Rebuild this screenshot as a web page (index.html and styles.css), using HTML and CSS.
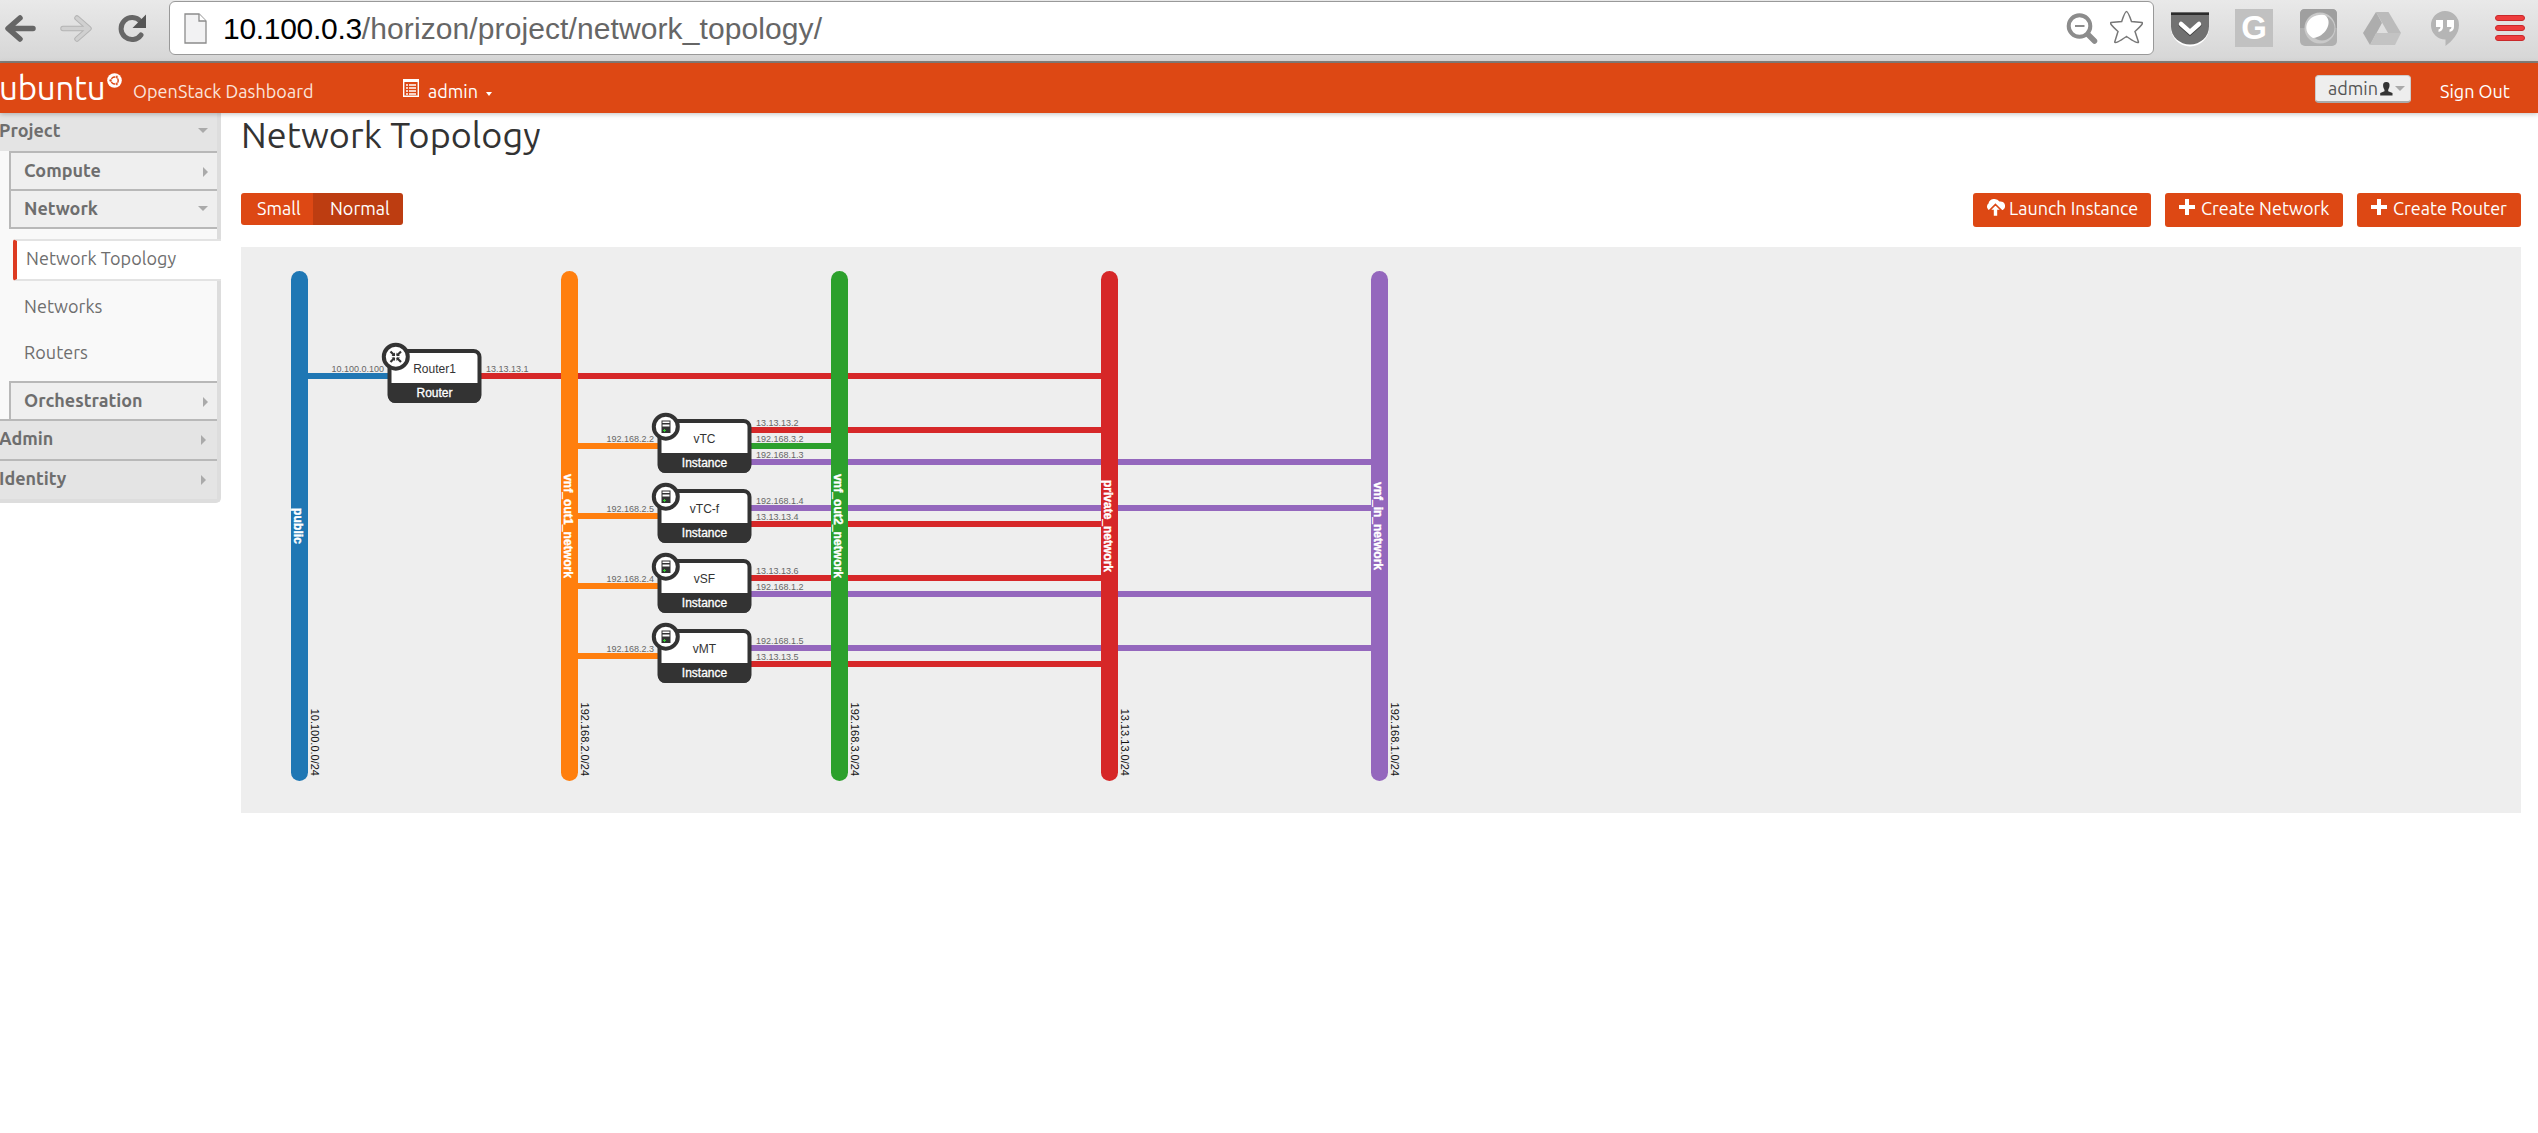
FILE: index.html
```html
<!DOCTYPE html>
<html lang="en">
<head>
<meta charset="utf-8">
<title>Network Topology - OpenStack Dashboard</title>
<link rel="stylesheet" href="styles.css">
</head>
<body>
<div class="browser">
  <svg class="nav-icons" width="169" height="62" viewBox="0 0 169 62">
    <path d="M20 18 8 28.500 20 39M9 28.500H33" fill="none" stroke="#666" stroke-width="5.500" stroke-linecap="round" stroke-linejoin="round"/>
    <path d="M77 18 89 28.500 77 39M88 28.500H63" fill="none" stroke="#b5b5b5" stroke-width="5.500" stroke-linecap="round" stroke-linejoin="round"/>
    <path d="M77 18 89 28.500 77 39M88 28.500H63" fill="none" stroke="#d0d0d0" stroke-width="3.500" stroke-linecap="round" stroke-linejoin="round"/>
    <path d="M140.500 21.500A11 11 0 1 0 141 35" fill="none" stroke="#666" stroke-width="5" stroke-linecap="round"/>
    <path d="M146 14.500V28H132.500Z" fill="#555"/>
  </svg>
  <div class="address">
    <svg class="page-icon" width="24" height="32" viewBox="0 0 24 32"><path d="M1 1H15L22 8V30H1Z" fill="#f2f2f3" stroke="#8c8c8c" stroke-width="1.300"/><path d="M15 1V8H22" fill="#fff" stroke="#8c8c8c" stroke-width="1.300"/></svg>
    <span class="url"><b>10.100.0.3</b>/horizon/project/network_topology/</span>
    <svg class="addr-icons" width="87" height="53" viewBox="2066 2 87 53">
      <circle cx="2079.500" cy="26" r="10.800" fill="none" stroke="#8c8c8c" stroke-width="4"/>
      <path d="M2075 26H2084.500" stroke="#8c8c8c" stroke-width="2"/><path d="M2088 34.500 2094.500 41" stroke="#8c8c8c" stroke-width="5.500" stroke-linecap="round"/>
      <path d="M2126.500 11.500Q2128 11.500 2131.500 21.500L2142 22.500Q2144 23.500 2135 31.500L2138.500 42Q2138 44.500 2126.500 36.500Q2115 44.500 2114.700 42L2118 31.500Q2109 23.500 2111 22.500L2121.700 21.500Q2125 11.500 2126.500 11.500Z" fill="#fff" stroke="#777" stroke-width="1.500"/>
    </svg>
  </div>
  <svg class="extensions" width="384" height="62" viewBox="2154 0 384 62">
    <path d="M2171 14H2209V28A19 18.500 0 0 1 2171 28Z" fill="#fff"/>
    <path d="M2171 12.500H2209V26.500A19 18 0 0 1 2171 26.500Z" fill="#717171"/><path d="M2171 12.500H2209V15H2171Z" fill="#2c2c2c"/>
    <path d="M2181 25 2190 33 2199 25" fill="none" stroke="#444" stroke-width="5" stroke-linecap="round"/><path d="M2181 24 2190 32 2199 24" fill="none" stroke="#fff" stroke-width="4.500" stroke-linecap="round"/>
    <rect x="2235" y="9" width="38" height="38" fill="#c1c1c1"/><text class="ext-g" x="2254" y="39" text-anchor="middle">G</text>
    <rect x="2300" y="9" width="37" height="37" rx="5" fill="#b0b0b0"/><path d="M2300 28V14Q2300 9 2305 9H2332Q2337 9 2337 14V28Z" fill="#9f9f9f"/>
    <circle cx="2320" cy="28" r="15.500" fill="#c9c9c9"/><circle cx="2322" cy="28" r="12.500" fill="#a9a9a9"/><path d="M2326 16C2333 23 2325 37 2313 38C2302 32 2305 17 2319 15Q2324 14 2326 16Z" fill="#fff"/>
    <path d="M2376 12H2388.500L2401 33H2388Z" fill="#bbb"/><path d="M2376 12 2363 33 2370 45 2382 23Z" fill="#adadad"/><path d="M2376 33H2401L2395 45H2370Z" fill="#c3c3c3"/>
    <path d="M2445 11A14 14 0 0 1 2459 25C2459 34 2452 41 2445.500 46V39.500A14 14 0 0 1 2445 11Z" fill="#b5b5b5"/>
    <path d="M2436 20H2443V27Q2443 31 2438.500 32V29.500Q2440.500 29 2440.500 27H2436ZM2447 20H2454V27Q2454 31 2449.500 32V29.500Q2451.500 29 2451.500 27H2447Z" fill="#fff"/>
    <g fill="#ee3c3c" stroke="#c9282b"><rect x="2495.500" y="15.500" width="29" height="5" rx="2.500"/><rect x="2495.500" y="25.500" width="29" height="5" rx="2.500"/><rect x="2495.500" y="35.500" width="29" height="5" rx="2.500"/></g>
  </svg>
</div>
<header class="topbar">
  <div class="brand"><span class="logo">ubuntu</span>
    <svg class="logo-mark" width="15" height="15" viewBox="0 0 15 15"><circle cx="7.500" cy="7.500" r="7.300" fill="#fff"/><circle cx="7.700" cy="7.500" r="3.500" fill="none" stroke="#dd4814" stroke-width="1.500"/><g fill="#dd4814" stroke="#fff" stroke-width=".6"><circle cx="3.500" cy="7.500" r="1.400"/><circle cx="9.800" cy="4" r="1.400"/><circle cx="9.800" cy="11" r="1.400"/></g></svg>
    <span class="product">OpenStack Dashboard</span></div>
  <div class="switcher">
    <svg width="16" height="18" viewBox="0 0 16 18"><path d="M.700 .700H15.300V17.300H.700Z" fill="none" stroke="#fff" stroke-width="1.400"/><path d="M1 2H15" stroke="#fff" stroke-width="2"/><path d="M3 6H5M3 9H5M3 12H5M3 15H5M6 6H13M6 9H13M6 12H13M6 15H13" stroke="#fff" stroke-width="1.500"/></svg>
    <span class="proj">admin</span><i class="caret white"></i>
  </div>
  <div class="account"><span class="account-name">admin</span>
    <svg width="13" height="14" viewBox="0 0 13 14"><path d="M6.300 0C9 0 9.800 1.500 9.500 4C9.300 6 8.500 6.500 8.200 8V9.300L12.500 11V13.500H.200V11L4.500 9.300V8C4 6.500 3.300 6 3.100 4C2.900 1.500 3.800 0 6.300 0Z" fill="#333"/></svg>
    <i class="caret grey"></i></div>
  <a class="signout">Sign Out</a>
</header>
<div class="page">
  <nav class="sidebar">
    <div class="panel first"><span>Project</span><i class="down"></i></div>
    <div class="groups">
      <div class="group"><span>Compute</span><i class="right"></i></div>
      <div class="group open"><span>Network</span><i class="down"></i></div>
      <div class="links">
        <a class="link active">Network Topology</a>
        <a class="link">Networks</a>
        <a class="link">Routers</a>
      </div>
      <div class="group"><span>Orchestration</span><i class="right"></i></div>
    </div>
    <div class="panel"><span>Admin</span><i class="right"></i></div>
    <div class="panel last"><span>Identity</span><i class="right"></i></div>
  </nav>
  <main class="content">
    <h1>Network Topology</h1>
    <div class="toolbar">
      <div class="sizes"><button class="small">Small</button><button class="normal">Normal</button></div>
      <div class="actions">
        <button class="launch"><svg width="19" height="19" viewBox="0 0 19 19"><path d="M4 12.500A4 4 0 0 1 2.500 5.500A6 5.500 0 0 1 13.500 3.500A4.500 4.500 0 0 1 15.500 12.500Z" fill="#fff"/><path d="M9.500 6.500 15.500 12.500H12V18.500H7V12.500H3.500Z" fill="#fff" stroke="#dd4814" stroke-width="1.600"/></svg><span>Launch Instance</span></button>
        <button class="network"><svg width="16" height="16" viewBox="0 0 16 16"><path d="M6 0H10V6H16V10H10V16H6V10H0V6H6Z" fill="#fff"/></svg><span>Create Network</span></button>
        <button class="router"><svg width="16" height="16" viewBox="0 0 16 16"><path d="M6 0H10V6H16V10H10V16H6V10H0V6H6Z" fill="#fff"/></svg><span>Create Router</span></button>
      </div>
    </div>
    <svg class="topology" width="2280" height="566" viewBox="241 247 2280 566">
      <defs>
        <g id="box"><rect x="2" y="2" width="90" height="50" rx="6" fill="#fff" stroke="#333" stroke-width="4"/><path d="M1 34H93V46Q93 54 86 54H8Q1 54 1 46Z" fill="#333"/><circle cx="8.300" cy="7.700" r="12" fill="#fff" stroke="#333" stroke-width="4"/></g>
        <g id="server"><path d="M4 1.500H13V14H4Z" fill="#333"/><path d="M5 2.500H12V4H5ZM5 5.500H12V7.500H5Z" fill="#fff"/><path d="M5.500 11.500H8.500M7 10V13" stroke="#3c3" stroke-width="1.100"/></g>
      </defs>
      <g class="ports">
        <path stroke="#1f77b4" d="M300 376H388"/>
        <path stroke="#ff7f0e" d="M570 446H658M570 516H658M570 586H658M570 656H658"/>
        <path stroke="#2ca02c" d="M751 446H840"/>
        <path stroke="#d62728" d="M481 376H1110M751 430H1110M751 524H1110M751 578H1110M751 664H1110"/>
        <path stroke="#9467bd" d="M751 462H1380M751 508H1380M751 594H1380M751 648H1380"/>
      </g>
      <g>
        <rect x="291" y="271" width="17" height="510" rx="8.500" fill="#1f77b4"/>
        <rect x="561" y="271" width="17" height="510" rx="8.500" fill="#ff7f0e"/>
        <rect x="831" y="271" width="17" height="510" rx="8.500" fill="#2ca02c"/>
        <rect x="1101" y="271" width="17" height="510" rx="8.500" fill="#d62728"/>
        <rect x="1371" y="271" width="17" height="510" rx="8.500" fill="#9467bd"/>
      </g>
      <g class="net-name">
        <text transform="translate(294 508) rotate(90)" textLength="36">public</text>
        <text transform="translate(564 474) rotate(90)" textLength="104">vnf_out1_network</text>
        <text transform="translate(834 474) rotate(90)" textLength="104">vnf_out2_network</text>
        <text transform="translate(1104 480) rotate(90)" textLength="92">private_network</text>
        <text transform="translate(1374 482) rotate(90)" textLength="88">vnf_in_network</text>
      </g>
      <g class="subnet">
        <text transform="translate(311 776) rotate(90)">10.100.0.0/24</text>
        <text transform="translate(581 776) rotate(90)">192.168.2.0/24</text>
        <text transform="translate(851 776) rotate(90)">192.168.3.0/24</text>
        <text transform="translate(1121 776) rotate(90)">13.13.13.0/24</text>
        <text transform="translate(1391 776) rotate(90)">192.168.1.0/24</text>
      </g>
      <g class="ip end">
        <text x="384" y="372">10.100.0.100</text><text x="654" y="442">192.168.2.2</text><text x="654" y="512">192.168.2.5</text><text x="654" y="582">192.168.2.4</text><text x="654" y="652">192.168.2.3</text>
      </g>
      <g class="ip">
        <text x="486" y="372">13.13.13.1</text><text x="756" y="426">13.13.13.2</text><text x="756" y="442">192.168.3.2</text><text x="756" y="458">192.168.1.3</text>
        <text x="756" y="504">192.168.1.4</text><text x="756" y="520">13.13.13.4</text><text x="756" y="574">13.13.13.6</text><text x="756" y="590">192.168.1.2</text>
        <text x="756" y="644">192.168.1.5</text><text x="756" y="660">13.13.13.5</text>
      </g>
      <g class="node" transform="translate(387.500 349)"><use href="#box"/>
        <path d="M3 2.500 7 6.500M13.500 2.500 9.500 6.500M3 13 7 9M13.500 13 9.500 9" stroke="#333" stroke-width="2.200"/><path d="M7.500 3.500V7H4ZM9 3.500V7H12.500ZM7.500 12V8.500H4ZM9 12V8.500H12.500Z" fill="#333"/>
        <text x="47" y="24">Router1</text><text class="kind" x="47" y="48">Router</text></g>
      <g class="node" transform="translate(657.500 419)"><use href="#box"/><use href="#server"/><text x="47" y="24">vTC</text><text class="kind" x="47" y="48">Instance</text></g>
      <g class="node" transform="translate(657.500 489)"><use href="#box"/><use href="#server"/><text x="47" y="24">vTC-f</text><text class="kind" x="47" y="48">Instance</text></g>
      <g class="node" transform="translate(657.500 559)"><use href="#box"/><use href="#server"/><text x="47" y="24">vSF</text><text class="kind" x="47" y="48">Instance</text></g>
      <g class="node" transform="translate(657.500 629)"><use href="#box"/><use href="#server"/><text x="47" y="24">vMT</text><text class="kind" x="47" y="48">Instance</text></g>
    </svg>
  </main>
</div>
</body>
</html>
```
FILE: styles.css
```css
* { box-sizing: border-box; }
body { margin: 0; background: #fff; font: 18px/1.2 Ubuntu, "Noto Sans", sans-serif; color: #333; }
svg { display: block; flex: none; }
.browser { height: 63px; display: flex; background: linear-gradient(#e9e9e9, #d6d6d6); border-bottom: 2px solid #85817c; }
.address { width: 1985px; height: 54px; margin-top: 1px; display: flex; align-items: flex-start; border: 1px solid #999; border-radius: 6px; background: #fff; }
.page-icon { margin: 11px 0 0 14px; }
.url { margin-left: 15px; font: 30px/54px "Liberation Sans", Arial, sans-serif; letter-spacing: .1px; color: #666; white-space: nowrap; }
.url b { font-weight: 400; color: #000; letter-spacing: -.3px; }
.addr-icons { margin-left: auto; }
.ext-g { font: bold 33px "Liberation Sans", Arial, sans-serif; fill: #fff; }
.topbar { position: relative; height: 50px; display: flex; align-items: flex-start; background: #dd4814; color: #fff; box-shadow: 0 1px 5px rgba(0, 0, 0, .25); z-index: 1; }
.brand { width: 403px; display: flex; align-items: flex-start; }
.logo { width: 107px; font-size: 33px; line-height: 49px; letter-spacing: -.2px; text-indent: -1px; }
.logo-mark { margin-top: 10px; }
.product { margin-left: 11px; line-height: 56px; letter-spacing: .05px; color: #fbe4dc; white-space: nowrap; }
.switcher { display: flex; align-items: flex-start; padding-top: 16px; }
.proj { margin-left: 9px; line-height: 24px; width: 58px; }
.caret { border: 3px solid transparent; border-bottom: 0; }
.caret.white { border-top: 4px solid #fff; margin-top: 13px; }
.caret.grey { border-width: 5px 5px 0; border-top-color: #aaa; margin-left: 2px; }
.account { margin: 12px 0 0 auto; width: 96px; height: 28px; padding-left: 12px; display: flex; align-items: center; background: #eee; border: 1px solid #ccc; border-bottom: 2px solid #aaa; border-radius: 4px; color: #555; }
.account-name { width: 52px; }
.signout { width: 98px; margin-left: 29px; line-height: 56px; }
.page { display: flex; align-items: flex-start; }
.sidebar { width: 221px; height: 390px; border-right: 4px solid #ddd; border-bottom: 4px solid #ddd; border-radius: 0 0 5px 0; background: #f9f9f9; color: #6e6e6e; }
.panel, .group { display: flex; align-items: center; justify-content: space-between; font-weight: 700; border-top: 2px solid #b8b8b8; }
.panel { height: 40px; padding: 0 11px 3px 0; background: #e4e4e4; }
.panel span { margin-left: -1px; }
.panel.first { height: 38px; border-top: 0; padding-right: 9px; }
.groups { padding-left: 9px; }
.group { height: 38px; padding: 0 9px 1px 13px; background: #efefef; border-left: 2px solid #b8b8b8; }
.group.open { height: 40px; border-bottom: 2px solid #b8b8b8; }
.down { border: 5px solid transparent; border-bottom: 0; border-top-color: #aaa; }
.right { border: 5px solid transparent; border-right: 0; border-left-color: #aaa; margin-top: 2px; }
.links { padding: 10px 0 0 4px; height: 152px; margin-right: -4px; }
.link { display: flex; align-items: center; height: 46px; padding: 0 0 2px 11px; letter-spacing: .05px; }
.link.active { height: 42px; margin-bottom: 4px; padding: 0 0 2px 9px; background: #fff; border: 2px solid #e3e3e3; border-left: 4px solid #dd3b22; border-right: 0; border-radius: 3px 0 0 3px; }
.content { width: 2280px; margin-left: 20px; }
h1 { margin: 0; height: 80px; font-size: 36px; line-height: 44px; letter-spacing: .05px; font-weight: 400; }
.toolbar { height: 54px; display: flex; justify-content: space-between; align-items: flex-start; }
.sizes, .actions { display: flex; }
.actions { gap: 14px; }
button { display: flex; align-items: flex-start; padding: 0; border: 0; background: #dd4814; color: #fff; font: inherit; line-height: 31px; border-radius: 3px; white-space: nowrap; }
.small { width: 72px; height: 32px; padding-left: 16px; border-radius: 3px 0 0 3px; }
.normal { width: 90px; height: 32px; padding-left: 17px; background: #bd3d11; border-radius: 0 3px 3px 0; }
.launch, .network, .router { height: 34px; padding-left: 14px; }
.launch { width: 178px; } .network { width: 178px; } .router { width: 164px; }
.launch svg { margin: 5px 0 0 -1px; } .network svg, .router svg { margin-top: 6px; }
.launch span { margin-left: 4px; } .network span, .router span { margin-left: 6px; }
.topology { background: #eee; font-family: "Liberation Sans", Arial, sans-serif; }
.ports { stroke-width: 6px; }
.net-name { font-size: 12px; font-weight: 700; fill: #fff; stroke: #fff; stroke-width: .4px; }
.subnet { font-size: 11px; fill: #111; text-anchor: end; }
.ip { font-size: 9px; fill: #666; }
.ip.end { text-anchor: end; }
.node text { font-size: 12px; fill: #333; text-anchor: middle; }
.node .kind { fill: #fff; stroke: #fff; stroke-width: .3px; }
```
